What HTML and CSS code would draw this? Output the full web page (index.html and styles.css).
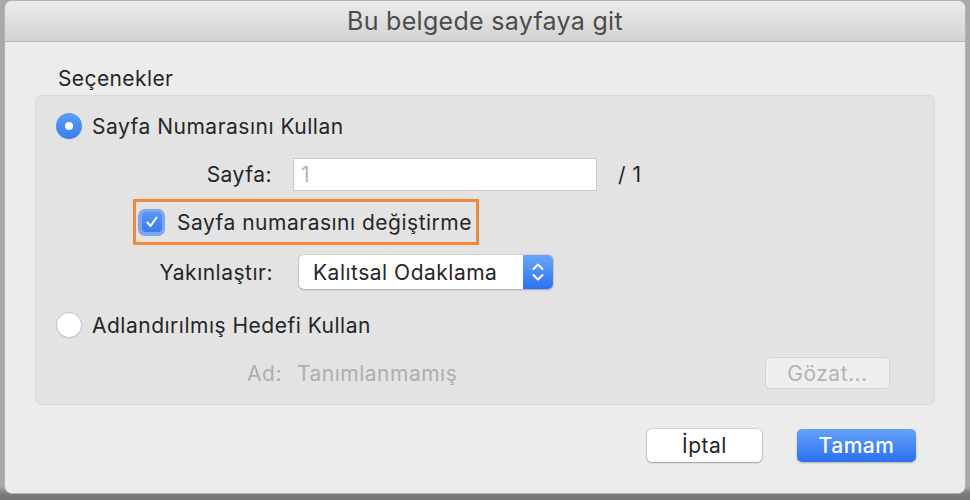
FILE: index.html
```html
<!DOCTYPE html>
<html lang="tr">
<head>
<meta charset="utf-8">
<title>Bu belgede sayfaya git</title>
<link rel="stylesheet" href="styles.css">
</head>
<body>
<div class="window">
  <div class="titlebar">Bu belgede sayfaya git</div>
  <div class="content">
    <div class="section-title">Seçenekler</div>
    <div class="group">
      <div class="row r1">
        <span class="radio on"></span>
        <span class="opt">Sayfa Numarasını Kullan</span>
      </div>
      <div class="row r2">
        <span class="label l-page">Sayfa:</span>
        <span class="input">1</span>
        <span class="total">/ 1</span>
      </div>
      <div class="row r3">
        <div class="focusbox">
          <span class="check-ring"><span class="check">
            <svg viewBox="0 0 20 20" width="20" height="20"><path d="M5.5 10.5 L8.6 14 L14.5 5.5" fill="none" stroke="#fff" stroke-width="2" stroke-linecap="round" stroke-linejoin="round"/></svg>
          </span></span>
          <span class="opt">Sayfa numarasını değiştirme</span>
        </div>
      </div>
      <div class="row r4">
        <span class="label l-zoom">Yakınlaştır:</span>
        <span class="popup">
          <span class="popup-text">Kalıtsal Odaklama</span>
          <span class="stepper">
            <svg viewBox="0 0 30 34" width="30" height="34"><path d="M10.5 14 L15 9.5 L19.5 14 M10.5 20 L15 24.5 L19.5 20" fill="none" stroke="#fff" stroke-width="2" stroke-linecap="round" stroke-linejoin="round"/></svg>
          </span>
        </span>
      </div>
      <div class="row r5">
        <span class="radio"></span>
        <span class="opt">Adlandırılmış Hedefi Kullan</span>
      </div>
      <div class="row r6">
        <span class="label l-name">Ad:</span>
        <span class="dim">Tanımlanmamış</span>
        <span class="btn disabled">Gözat...</span>
      </div>
    </div>
    <div class="footer">
      <span class="btn cancel">İptal</span>
      <span class="btn primary">Tamam</span>
    </div>
  </div>
</div>
</body>
</html>
```

FILE: styles.css
```css
html, body {
  margin: 0;
  padding: 0;
}
body {
  width: 970px;
  height: 500px;
  overflow: hidden;
  background: linear-gradient(to bottom, #a9a9a9 0, #a9a9a9 486px, #7a7a7a 494px, #777 500px);
  font-family: Inter, "Liberation Sans", Arial, sans-serif;
  color: #262626;
}
.window {
  margin-left: 4px;
  width: 960px;
  height: 492px;
  background: #ececec;
  border: 1px solid #b3b3b3;
  border-radius: 8px;
  overflow: hidden;
  box-sizing: content-box;
}
.titlebar {
  height: 40px;
  border-bottom: 1px solid #b8b8b8;
  background: linear-gradient(to bottom, #ebebeb, #d3d3d3);
  text-align: center;
  font-size: 25px;
  letter-spacing: 0.3px;
  line-height: 40px;
  color: #4c4c4c;
}
.content {
  padding: 0 30px;
}
.section-title {
  font-size: 21px;
  letter-spacing: 0.4px;
  height: 53px;
  line-height: 22px;
  padding-top: 26px;
  padding-left: 23px;
  box-sizing: border-box;
  color: #262626;
}
.group {
  width: 900px;
  height: 310px;
  box-sizing: border-box;
  background: #e3e3e3;
  border: 1px solid #d9d9d9;
  border-radius: 6px;
  padding-top: 13px;
}
.row {
  display: flex;
  align-items: center;
  height: 34px;
  font-size: 21px;
  letter-spacing: 0.5px;
}
.r1 { padding-left: 20px; }
.r2 { margin-top: 14px; }
.r3 { margin-top: 8px; height: 46px; }
.r4 { margin-top: 10px; }
.r5 { margin-top: 19px; padding-left: 20px; }
.r6 { margin-top: 14px; }
.radio {
  width: 26px;
  height: 26px;
  border-radius: 50%;
  box-sizing: border-box;
  background: #fff;
  border: 1px solid #c4c4c4;
  box-shadow: 0 1px 1px rgba(0,0,0,0.06);
  margin-right: 10px;
  display: flex;
  align-items: center;
  justify-content: center;
}
.radio.on {
  background: linear-gradient(to bottom, #5d9bf7, #3b7ff0);
  border: none;
}
.radio.on::after {
  content: "";
  width: 8px;
  height: 8px;
  border-radius: 50%;
  background: #fff;
}
.opt {
  color: #262626;
}
.label {
  text-align: right;
  color: #262626;
}
.l-page { width: 236px; margin-right: 21px; }
.l-zoom { width: 237px; margin-right: 26px; }
.l-name { width: 246px; margin-right: 15px; color: #aeaeae; }
.input {
  width: 304px;
  height: 33px;
  box-sizing: border-box;
  background: #fff;
  border: 1px solid #cbcbcb;
  padding-left: 7px;
  line-height: 31px;
  color: #b3b3b3;
}
.total {
  margin-left: 21px;
}
.focusbox {
  margin-left: 97px;
  width: 346px;
  height: 46px;
  box-sizing: border-box;
  border: 3px solid #f0893a;
  display: flex;
  align-items: center;
  padding-left: 2px;
}
.check-ring {
  width: 27px;
  height: 27px;
  border-radius: 7px;
  background: #7fa6ef;
  display: flex;
  align-items: center;
  justify-content: center;
  margin-right: 12px;
}
.check {
  width: 20px;
  height: 20px;
  border-radius: 4px;
  background: linear-gradient(to bottom, #5a97f5, #3a7bee);
  display: flex;
}
.popup {
  width: 254px;
  height: 34px;
  box-sizing: border-box;
  border-radius: 5px;
  background: #fff;
  box-shadow: 0 0 0 1px rgba(0,0,0,0.08), 0 1px 2px rgba(0,0,0,0.2);
  display: flex;
  align-items: center;
  overflow: hidden;
}
.popup-text {
  flex: 1;
  padding-left: 14px;
  color: #262626;
}
.stepper {
  width: 30px;
  height: 34px;
  background: linear-gradient(to bottom, #6aa6f8, #2a72ef);
  display: flex;
}
.dim {
  color: #aeaeae;
}
.btn {
  display: flex;
  align-items: center;
  justify-content: center;
  height: 33px;
  box-sizing: border-box;
  border-radius: 5px;
  font-size: 21px;
  letter-spacing: 0.5px;
}
.btn.disabled {
  margin-left: auto;
  margin-right: 44px;
  width: 125px;
  height: 32px;
  background: #efefef;
  border: 1px solid #d3d3d3;
  color: #b3b3b3;
}
.footer {
  display: flex;
  justify-content: flex-end;
  padding-top: 24px;
  padding-right: 19px;
}
.btn.cancel {
  width: 115px;
  background: #fff;
  box-shadow: 0 0 0 1px rgba(0,0,0,0.1), 0 1px 2px rgba(0,0,0,0.25);
  color: #262626;
  margin-right: 35px;
}
.btn.primary {
  width: 119px;
  background: linear-gradient(to bottom, #64a2f8, #2b70ef);
  box-shadow: 0 1px 2px rgba(0,0,0,0.25);
  color: #fff;
  font-weight: 500;
}
```
